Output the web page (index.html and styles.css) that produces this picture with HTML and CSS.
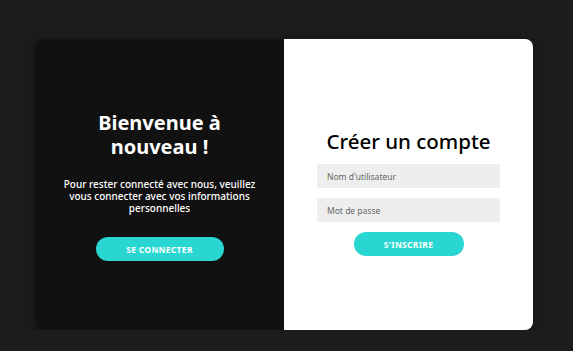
FILE: index.html
```html
<!DOCTYPE HTML>
<html lang="fr">

<head>
    <meta charset="utf-8">
    <title>Connexion</title>

    <link rel="stylesheet" href="styles.css">
</head>

<body>
    <div class="container">

        <div class="panel panel-left">
            <h1 class="welcome">Bienvenue à<br>nouveau !</h1>
            <p class="intro">Pour rester connecté avec nous, veuillez vous connecter avec vos informations personnelles</p>
            <button class="btn">SE CONNECTER</button>
        </div>

        <div class="panel panel-right">
            <h2 class="title">Créer un compte</h2>
            <input class="field" type="text" placeholder="Nom d'utilisateur">
            <input class="field" type="password" placeholder="Mot de passe">
            <button class="btn btn-small">S'INSCRIRE</button>
        </div>

    </div>
</body>

</html>
```

FILE: styles.css
```css
*{
    box-sizing: border-box;
    padding: 0;
    margin: 0;
}

body{
    background: #1c1c1c;
    font-family: "Noto Sans", "DejaVu Sans", sans-serif;
    padding-top: 39px;
}

.container{
    width: 498px;
    height: 291px;
    margin-left: 35px;
    display: flex;
    border-radius: 8px;
    overflow: hidden;
    box-shadow: 0 2px 10px rgba(0, 0, 0, 0.35);
}

.panel{
    width: 249px;
    display: flex;
    flex-direction: column;
    align-items: center;
}

.panel-left{
    background-color: #111111;
    color: #ffffff;
    padding-top: 72px;
}

.panel-right{
    background-color: #ffffff;
    padding-top: 88px;
}

.welcome{
    font-size: 20px;
    line-height: 24px;
    font-weight: 700;
    text-align: center;
}

.intro{
    width: 196px;
    margin-top: 19px;
    font-size: 10px;
    line-height: 12px;
    font-weight: 500;
    text-align: center;
}

.btn{
    margin-top: 23px;
    width: 128px;
    height: 24px;
    border: 0;
    border-radius: 12px;
    background-color: #2ad6d2;
    color: #ffffff;
    font-family: inherit;
    font-size: 8.5px;
    font-weight: 700;
    letter-spacing: 0.3px;
    outline: none;
    cursor: pointer;
}

.btn-small{
    width: 110px;
    margin-top: 0;
}

.title{
    font-size: 20.5px;
    line-height: 28px;
    font-weight: 500;
    color: #000000;
    margin-bottom: 9px;
}

.field{
    width: 183px;
    height: 24px;
    margin-bottom: 10px;
    border: 0;
    background-color: #eeeeee;
    padding-left: 10px;
    font-family: inherit;
    font-size: 8.5px;
    outline: none;
}

.field::placeholder{
    color: #666666;
}
```
